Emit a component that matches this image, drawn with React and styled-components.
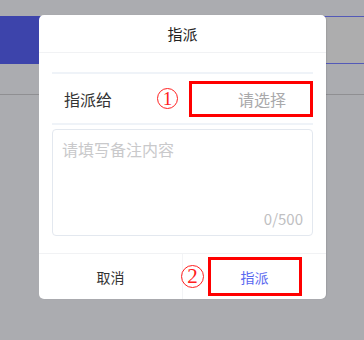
import React from 'react';
import styled, { createGlobalStyle } from 'styled-components';

const GlobalStyle = createGlobalStyle`
  html, body {
    margin: 0;
    padding: 0;
    background: #abacb0;
  }
  body {
    font-family: "Noto Sans CJK SC", "Noto Sans", sans-serif;
  }
`;

const Page = styled.div`
  position: relative;
  width: 364px;
  height: 340px;
  overflow: hidden;
  background: #abacb0;
`;

const TopBar = styled.div`
  display: flex;
  justify-content: space-between;
  margin-top: 16px;
  height: 48px;
`;

const BlueButton = styled.div`
  width: 60px;
  background: #3d44ab;
  border-radius: 0 4px 4px 0;
`;

const GhostBox = styled.div`
  width: 60px;
  background: #adadae;
  border-top: 1px solid #5359b8;
  border-bottom: 1px solid #5359b8;
  box-sizing: border-box;
`;

const Rule = styled.div`
  margin-top: 30px;
  height: 1px;
  background: #8f8f92;
`;

const Modal = styled.div`
  position: absolute;
  left: 39px;
  top: 15px;
  width: 287px;
  background: #fff;
  border-radius: 5px;
  box-shadow: 1px 0 1px rgba(0, 0, 0, 0.08);
  display: flex;
  flex-direction: column;
`;

const Header = styled.div`
  height: 37px;
  display: flex;
  align-items: center;
  justify-content: center;
  font-size: 15px;
  color: #222;
  border-bottom: 1px solid #f1f2f4;
`;

const Body = styled.div`
  padding: 19px 13px 17px;
  display: flex;
  flex-direction: column;
`;

const Field = styled.div`
  display: flex;
  align-items: center;
  height: 49px;
  border-top: 2px solid #eff3f8;
  border-bottom: 2px solid #eff3f8;
  padding-left: 12px;
`;

const Label = styled.span`
  flex: 1;
  font-size: 16px;
  color: #333;
`;

const Marker = styled.span`
  display: inline-flex;
  align-items: center;
  justify-content: center;
  width: 21px;
  height: 21px;
  border: 1px solid #ff2020;
  border-radius: 50%;
  color: #ff2020;
  font-family: "Liberation Serif", serif;
  font-size: 19px;
  line-height: 1;
  box-sizing: border-box;
  margin-right: ${(p) => p.$gap || 0}px;
`;

const Highlight = styled.div`
  border: 3px solid #ff0000;
  box-sizing: border-box;
  width: ${(p) => p.$w}px;
  height: ${(p) => p.$h}px;
  display: flex;
  align-items: center;
  justify-content: ${(p) => p.$align || 'center'};
  padding-left: ${(p) => p.$pl || 0}px;
`;

const Placeholder = styled.span`
  font-size: 16px;
  color: #a9a9ab;
`;

const TextArea = styled.div`
  margin-top: 4px;
  height: 107px;
  box-sizing: border-box;
  border: 1px solid #e3e8ef;
  border-radius: 4px;
  padding: 7px 9px 6px;
  display: flex;
  flex-direction: column;
  justify-content: space-between;
`;

const Hint = styled.span`
  font-size: 16px;
  color: #c9c9cb;
`;

const Count = styled.span`
  align-self: flex-end;
  font-size: 15px;
  color: #c0c0c2;
`;

const Footer = styled.div`
  position: relative;
  display: flex;
  height: 45px;
  border-top: 1px solid #f1f2f4;
`;

const Action = styled.div`
  flex: 1;
  display: flex;
  align-items: center;
  justify-content: center;
  font-size: 14px;
  color: ${(p) => (p.$primary ? '#5a68f0' : '#333')};
  & + & {
    border-left: 1px solid #f3f4f6;
  }
`;

const FloatMarker = styled(Marker)`
  position: absolute;
  left: 142px;
  top: 11px;
  width: 23px;
  height: 23px;
  font-size: 21px;
`;

export default function App() {
  return (
    <>
      <GlobalStyle />
      <Page>
        <TopBar>
          <BlueButton />
          <GhostBox />
        </TopBar>
        <Rule />
        <Modal>
          <Header>指派</Header>
          <Body>
            <Field>
              <Label>指派给</Label>
              <Marker $gap={11}>1</Marker>
              <Highlight $w={124} $h={36} $align="flex-start" $pl={46}>
                <Placeholder>请选择</Placeholder>
              </Highlight>
            </Field>
            <TextArea>
              <Hint>请填写备注内容</Hint>
              <Count>0/500</Count>
            </TextArea>
          </Body>
          <Footer>
            <Action>取消</Action>
            <Action $primary>
              <Highlight $w={94} $h={39}>指派</Highlight>
            </Action>
            <FloatMarker>2</FloatMarker>
          </Footer>
        </Modal>
      </Page>
    </>
  );
}
